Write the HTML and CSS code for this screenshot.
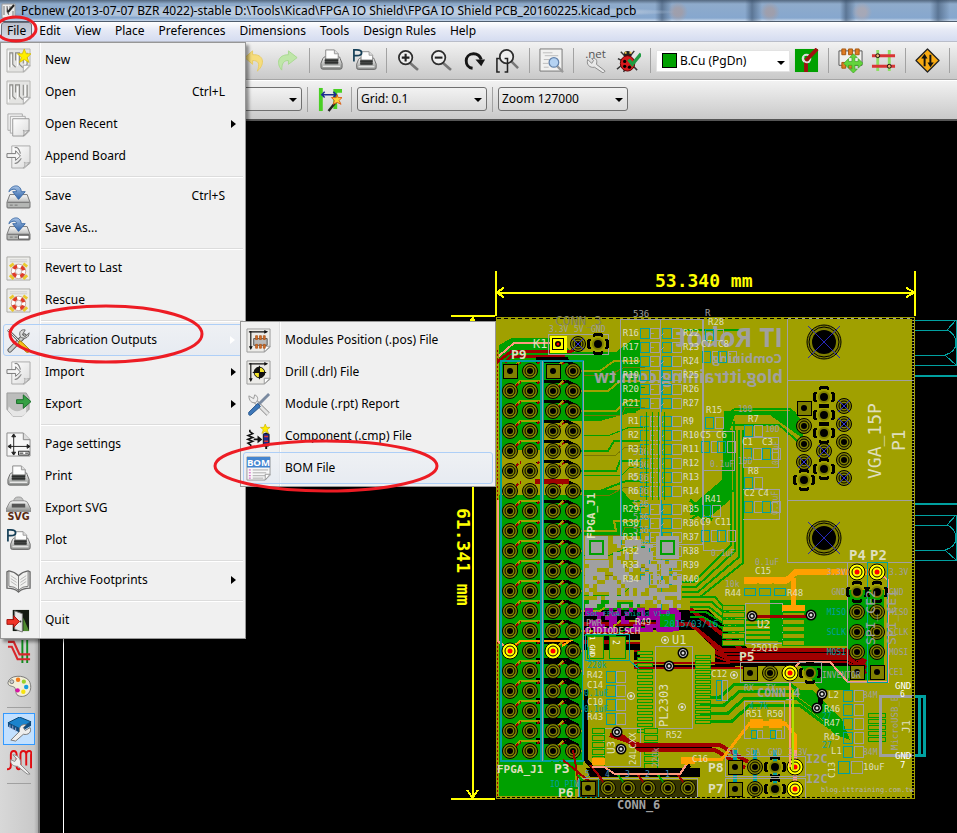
FILE: index.html
```html
<!DOCTYPE html>
<html lang="en">
<head>
<meta charset="utf-8">
<title>Pcbnew</title>
<link rel="stylesheet" href="styles.css">
</head>
<body>
<svg class="defs" aria-hidden="true">
  <defs>
    <linearGradient id="metal" x1="0" y1="0" x2="0" y2="1"><stop offset="0" stop-color="#fafafa"/><stop offset="1" stop-color="#8c8e8c"/></linearGradient>
    <linearGradient id="leaf" x1="0" y1="0" x2="1" y2="1"><stop offset="0" stop-color="#ffffff"/><stop offset="1" stop-color="#dcdcdc"/></linearGradient>
    <linearGradient id="blue" x1="0" y1="0" x2="0" y2="1"><stop offset="0" stop-color="#a9c4e6"/><stop offset="1" stop-color="#2d62a8"/></linearGradient>
  </defs>
  <symbol id="i-board" viewBox="0 0 26 26">
    <path d="M1 1H25V19L19 25H1Z" fill="#e4e4e2" stroke="#b5b5b2"/>
    <path d="M4 20V5H7V17L10 20M10 13V5H14V17L17 20H19L22 17V5M18 5V16" fill="none" stroke="#8b8b88" stroke-width="1.2"/>
    <path d="M5.500 7V20M12 7V19M20 5V17M2.500 3V23" fill="none" stroke="#fff"/>
    <path d="M25 18H18V25Z" fill="#fafafa" stroke="#aaa"/>
  </symbol>
  <symbol id="i-new" viewBox="0 0 26 26">
    <use href="#i-board"/>
    <path d="M19 1L21 6H26L22 10L24 15L19 12L14 15L16 10L12 6H17Z" fill="#ffef00" stroke="#d2b800" stroke-width=".8"/>
  </symbol>
  <symbol id="i-docs" viewBox="0 0 26 26">
    <path d="M2 2H17V19H2Z" fill="#f4f4f4" stroke="#aaa"/><path d="M4.500 4.500H20V22H4.500Z" fill="#f4f4f4" stroke="#aaa"/>
    <path d="M7 7H24V20L19 25H7Z" fill="url(#leaf)" stroke="#999"/><path d="M24 19C21 20 19 20 18 19C19 21 19 23 18 25Z" fill="#e8e8e8" stroke="#999"/>
  </symbol>
  <symbol id="i-append" viewBox="0 0 26 26">
    <path d="M6 2H25V20L19 25H6Z" fill="url(#leaf)" stroke="#aaa"/><path d="M25 19C22 20 20 20 19 19C20 21 20 23 18 25Z" fill="#e4e4e4" stroke="#aaa"/>
    <path d="M9 4C12 2 14 6 15 10M9 20C12 21 14 17 16 15" fill="none" stroke="#888" stroke-width="1.300"/>
    <path d="M1 10H10V7L15 12.500L10 17V14H1Z" fill="#f5f5f5" stroke="#777"/>
  </symbol>
  <symbol id="i-disk" viewBox="0 0 26 26">
    <path d="M4 11H22L25 19V24Q25 25 24 25H2Q1 25 1 24V19Z" fill="url(#metal)" stroke="#777"/><path d="M1.500 19H24.500" stroke="#666"/><path d="M2 20H24V24H2Z" fill="#b4b6b4"/><path d="M4 22H7M9 22H12" stroke="#777"/>
    <path d="M3 8C5 1 15-1 16 8H20L13 16L7 8H11C11 5 7 4 3 8Z" fill="url(#blue)" stroke="#3b6aa5"/>
  </symbol>
  <symbol id="i-saveas" viewBox="0 0 26 26"><use href="#i-disk"/><path d="M13 20H24V24H13Z" fill="#fff" stroke="#555"/></symbol>
  <symbol id="i-buoy" viewBox="0 0 26 26">
    <path d="M1 1H25V25H1Z" fill="#ededea" stroke="#a9a9a6"/><path d="M4 4H22M4 6H22" stroke="#ccc"/>
    <path d="M4 11L8 8M22 11L18 8M4 20L8 24M22 20L18 24" stroke="#eac92e" stroke-width="3"/>
    <circle cx="13" cy="16" r="5.500" fill="none" stroke="#fff" stroke-width="4"/><circle cx="13" cy="16" r="5.500" fill="none" stroke="#e13b28" stroke-width="4" stroke-dasharray="4.320 4.320" stroke-dashoffset="-2.200"/>
    <circle cx="13" cy="16" r="7.500" fill="none" stroke="#b4887f" stroke-width=".7"/><circle cx="13" cy="16" r="3.300" fill="#f5f5f5" stroke="#b4887f" stroke-width=".7"/>
  </symbol>
  <symbol id="i-tools" viewBox="0 0 26 26">
    <path d="M4 23L19 8" stroke="#555" stroke-width="5" stroke-linecap="round"/><path d="M4 23L19 8" stroke="#c9cbc9" stroke-width="3" stroke-linecap="round"/>
    <path d="M24 5L20 9L17 7L20 2C15 1 13 5 15 9C18 12 24 11 24 5Z" fill="#d9dad9" stroke="#666"/>
    <path d="M2 2L14 14" stroke="#666" stroke-width="2.500"/><path d="M2 2L14 14" stroke="#eee"/><path d="M14 13L17 15L25 23C25 25 22 26 21 25L13 16Z" fill="#f4c21a" stroke="#a98100"/>
  </symbol>
  <symbol id="i-export" viewBox="0 0 26 26">
    <path d="M1 1H21L24 6V18L17 25H7L1 18Z" fill="#bcbdbc" stroke="#999"/><path d="M3 15Q11 25 21 15V22L17 25H7L2 19Z" fill="#e6e6e6"/>
    <path d="M11 8H18V3L26 10L18 17V12H11Z" fill="#35a044" stroke="#176c28"/>
  </symbol>
  <symbol id="i-page" viewBox="0 0 26 26">
    <path d="M1 1H18L25 8V25H1Z" fill="#f7f7f7" stroke="#888"/><path d="M18 1V8H25" fill="#ddd" stroke="#888"/>
    <path d="M8 3V23M3 15H24M8 2L6 5H10ZM8 24L6 21H10ZM2 15L5 13V17ZM25 15L22 13V17Z" fill="#222" stroke="#222"/>
    <path d="M13 20H24V24H13ZM14 22H18M20 22H23" fill="#fff" stroke="#222"/>
  </symbol>
  <symbol id="i-print" viewBox="0 0 26 26">
    <path d="M4 11Q5 9 7 9H20Q22 9 22 11L24 16V20Q24 22 22 22H4Q2 22 2 20V16Z" fill="url(#metal)" stroke="#666"/>
    <path d="M7 2H16L20 6V12H7Z" fill="#fdfdfd" stroke="#888"/><path d="M16 2V6H20" fill="#ddd" stroke="#999"/>
    <path d="M6 11H20V17H6Z" fill="#4a4c4b"/><path d="M6 13H20M6 15H20" stroke="#2c2e2d"/><path d="M4 19H22" stroke="#fff"/>
  </symbol>
  <symbol id="i-svg" viewBox="0 0 26 26">
    <path d="M8 6Q8 1 13 1Q18 1 18 6Z" fill="#c4c5c4" stroke="#999"/><path d="M3 8Q4 5 7 5H19Q22 5 23 8L26 14V16H0V14Z" fill="url(#metal)" stroke="#888"/><path d="M6 8H20V12H6Z" fill="#555"/>
    <text x="13" y="25" class="ic-svg">SVG</text>
  </symbol>
  <symbol id="i-plot" viewBox="0 0 26 26"><use href="#i-print" x="3" y="1" width="24" height="26"/><path d="M2 14V2H5Q10 2 10 5T5 8H2" fill="none" stroke="#153f57" stroke-width="1.800"/></symbol>
  <symbol id="i-book" viewBox="0 0 26 26">
    <path d="M1 4L3 3Q9 4 13 8Q17 4 23 3L25 4V21Q17 21 13 25Q9 21 1 21Z" fill="#f1f1ef" stroke="#666" stroke-width="1.400"/>
    <path d="M13 8V24M3 4V19Q9 19 13 23Q17 19 23 19V4" fill="none" stroke="#777"/><path d="M5 8L11 12M5 11L11 15M5 14L11 18M21 8L15 12M21 11L15 15M21 14L15 18" stroke="#b5b5b5"/>
  </symbol>
  <symbol id="i-quit" viewBox="0 0 26 26">
    <path d="M7 2H24V24H7Z" fill="#141a12"/><path d="M18 10L24 24H18Z" fill="#4f8a30"/><path d="M9 3L17 6V25L9 22Z" fill="#e8e8e8" stroke="#777"/><circle cx="15" cy="14" r="1" fill="#333"/>
    <path d="M1 12H8V8L14 14L8 20V17H1Z" fill="#ef3326" stroke="#a01510"/>
  </symbol>
  <symbol id="i-sheet" viewBox="0 0 26 26"><path d="M1 1H25V20L19 25H1Z" fill="#ecebe8" stroke="#999"/><path d="M25 19H19V25Z" fill="#fff" stroke="#999"/><path d="M3 4H21M5 3V21" stroke="#111" stroke-width="1.200"/><path d="M23 4L19 2V6ZM5 23L3 19H7Z" fill="#111"/></symbol>
  <symbol id="i-pos" viewBox="0 0 26 26"><use href="#i-sheet"/><path d="M8 11H22V18H8Z" fill="#b9b9b9" stroke="#555"/><path d="M10 8H12V12H10ZM14 8H16V12H14ZM18 8H20V12H18ZM10 17H12V21H10ZM14 17H16V21H14ZM18 17H20V21H18Z" fill="#d9702a" stroke="#a8551c" stroke-width=".8"/></symbol>
  <symbol id="i-drill" viewBox="0 0 26 26"><use href="#i-sheet"/><circle cx="14" cy="13" r="5.500" fill="#f0e028" stroke="#111"/><path d="M14 13V7.500A5.500 5.500 0 0 0 8.500 13ZM14 13V18.500A5.500 5.500 0 0 0 19.500 13ZM7 13H21M14 6V20" fill="#111" stroke="#111"/></symbol>
  <symbol id="i-report" viewBox="0 0 26 26"><path d="M23 23L7 7" stroke="#888" stroke-width="4.500"/><path d="M23 23L7 7" stroke="#e4e4e4" stroke-width="3"/><path d="M3 4L8 7L9 3C13 4 13 9 10 11C6 12 3 9 3 4Z" fill="#eee" stroke="#999"/><path d="M24 2L13 13" stroke="#7a8aa0" stroke-width="3"/><path d="M12 12L15 15L5 24Q2 25 3 21Z" fill="#3e77b8" stroke="#28588f"/></symbol>
  <symbol id="i-cmp" viewBox="0 0 26 26"><path d="M4 6V8L7 10L2 12L7 14L2 16L7 18L2 20L5 22V25" fill="none" stroke="#111" stroke-width="1.600"/><path d="M8 15H12V12L17 16L12 20V17H8Z" fill="#111"/><path d="M21 9V26" stroke="#111" stroke-width="2"/><rect x="18" y="10" width="6" height="13" rx="1" fill="#1a2890" stroke="#111"/><path d="M19 13H23M19 18H23" stroke="#e0342d" stroke-width="1.500"/><path d="M20 0L21.500 3.500H25L22 6L23.500 10L20 7.500L16.500 10L18 6L15 3.500H18.500Z" fill="#ffed00" stroke="#c3a800" stroke-width=".6"/></symbol>
  <symbol id="i-bom" viewBox="0 0 26 26"><path d="M1 1H25V20L20 25H1Z" fill="#f7f7f7" stroke="#999"/><path d="M1 1H25V12H1Z" fill="#4384cf"/><text x="13" y="10" class="ic-bom">BOM</text><path d="M7 14.500H23M7 17.500H21M7 20.500H20M7 23H18" stroke="#aaa"/><path d="M3 14.500H5M3 17.500H5M3 20.500H5M3 23H5" stroke="#d048c0"/><path d="M25 19H20V25Z" fill="#fff" stroke="#999"/></symbol>
  <symbol id="i-undo" viewBox="0 0 26 26"><path d="M3 10L11 3V7C22 6 25 16 16 24C19 16 17 13 11 13V17Z" fill="#f6dd7c" stroke="#e8cc66"/></symbol>
  <symbol id="i-redo" viewBox="0 0 26 26"><path d="M23 10L14 3V7C3 7 1 16 7 23C7 16 9 13 14 13V17Z" fill="#bfe6a9" stroke="#a8d890"/></symbol>
  <symbol id="i-lens" viewBox="0 0 26 26"><path d="M14 15L22 22" stroke="#777" stroke-width="2.800" stroke-linecap="round"/><circle cx="10" cy="10" r="7" fill="#eee" stroke="#2d2d2d" stroke-width="1.800"/></symbol>
  <symbol id="i-zin" viewBox="0 0 26 26"><use href="#i-lens"/><path d="M6 10H14M10 6V14" stroke="#222" stroke-width="2.200"/></symbol>
  <symbol id="i-zout" viewBox="0 0 26 26"><use href="#i-lens"/><path d="M6 10H14" stroke="#222" stroke-width="2.200"/></symbol>
  <symbol id="i-refresh" viewBox="0 0 26 26"><path d="M11 21C2 20 2 6 12 6Q18 6 20 12" fill="none" stroke="#161616" stroke-width="3"/><path d="M14 12H24L20 19Z" fill="#161616"/></symbol>
  <symbol id="i-zfit" viewBox="0 0 26 26"><path d="M17 14L24 21" stroke="#777" stroke-width="2.600"/><circle cx="12" cy="9" r="7" fill="#eee" stroke="#2d2d2d" stroke-width="1.800"/><path d="M5 11H2V25H5M10 11H13V25H10" fill="none" stroke="#222" stroke-width="1.600"/></symbol>
  <symbol id="i-preview" viewBox="0 0 26 26"><path d="M1 1H24V24H1Z" fill="#f1f1f0" stroke="#777"/><path d="M4 5H14M6 8H20M5 12H11M4 16H10M5 20H10" stroke="#bbb"/><path d="M19 19L25 25" stroke="#999" stroke-width="2.500"/><circle cx="15.500" cy="15" r="5" fill="#b4d2f2" stroke="#6483ab" stroke-width="1.300"/></symbol>
  <symbol id="i-net" viewBox="0 0 26 26"><text x="13" y="10" class="ic-net">.net</text><path d="M5 12L9 16L11 13L9 11C14 10 15 13 14 17L23 24L21 26L12 20C7 21 3 17 5 12Z" fill="#e9e9e9" stroke="#888"/></symbol>
  <symbol id="i-bug" viewBox="0 0 26 26"><path d="M5 4L9 8M19 3L15 8M2 11L6 13M1 22L6 18M22 23L18 19M8 25L9 22" stroke="#333" stroke-width="1.500"/><circle cx="12" cy="7" r="4" fill="#222"/><path d="M9 5H11M14 5H16" stroke="#ecc64a" stroke-width="2"/><ellipse cx="12" cy="16" rx="7.500" ry="8" fill="#d7191d" stroke="#5c0000"/><circle cx="9" cy="14" r="1.700"/><circle cx="9" cy="19" r="1.700"/><circle cx="14" cy="20" r="1.700"/><path d="M13 12L17 17L26 6" fill="none" stroke="#209c42" stroke-width="3.500"/></symbol>
  <symbol id="i-pair" viewBox="0 0 26 26"><path d="M1 1H25V25H1Z" fill="#00a000"/><circle cx="13" cy="11" r="4" fill="none" stroke="#ddd" stroke-width="2"/><path d="M12.500 25V13L24 1" fill="none" stroke="#a01010" stroke-width="4"/><path d="M10 9A4 4 0 0 0 16 14" fill="none" stroke="#ddd" stroke-width="2"/></symbol>
  <symbol id="i-mod" viewBox="0 0 26 26"><path d="M1 3H25V18H1Z" fill="#f0f0ee" stroke="#555"/><path d="M4 1H8V7H4ZM11 1H15V7H11ZM18 1H22V7H18ZM4 15H8V21H4ZM11 15H15V21H11Z" fill="#e07c22" stroke="#a4560f"/><path d="M16 6L20 10H17.500V14H21V11L26 16L21 21V18H17.500V22H20L16 26L12 22H14.500V18H11V21L6 16L11 11V14H14.500V10H12Z" fill="#63d43c" stroke="#39a022" stroke-width=".7"/></symbol>
  <symbol id="i-track" viewBox="0 0 26 26"><path d="M7 2V24M19 2V24" stroke="#8dde63" stroke-width="3"/><path d="M1 8H25M1 19H25" stroke="#d93535" stroke-width="3"/><circle cx="7" cy="8" r="2" fill="#f0b070" stroke="#111"/><circle cx="19" cy="19" r="2" fill="#f0b070" stroke="#111"/></symbol>
  <symbol id="i-sign" viewBox="0 0 26 26"><path d="M13 1L25 13L13 25L1 13Z" fill="#f8aa12" stroke="#222" stroke-linejoin="round" stroke-width="1.300"/><path d="M10 19V10M16 7V16" stroke="#111" stroke-width="2"/><path d="M6.500 11L10 6L13 11ZM13 15H19.500L16 20Z" fill="#111"/></symbol>
  <symbol id="i-auto" viewBox="0 0 26 26"><path d="M4 1V25" stroke="#49cf23" stroke-width="4"/><path d="M19 23V4H26" fill="none" stroke="#49cf23" stroke-width="4"/><path d="M5 8H20M8 5L5 8L8 11M17 5L20 8L17 11" fill="none" stroke="#1c2c91" stroke-width="1.600"/><path d="M12 25L20 15" stroke="#222" stroke-width="2.500"/><path d="M21 8L22 11L26 11L23 14L25 18L21 16L17 18L18 14L15 11L20 11Z" fill="#ffd33a" stroke="#d85f1b"/></symbol>
  <symbol id="i-route" viewBox="0 0 26 26"><path d="M16 0V24M21 0V24" stroke="#108c1e" stroke-width="2"/><path d="M1 2H7L13 15H24M1 7H5L11 20H24" fill="none" stroke="#d8262a" stroke-width="2.200"/></symbol>
  <symbol id="i-palette" viewBox="0 0 26 26"><path d="M1 9C2 1 18 0 23 7C28 17 21 25 13 23C8 22 10 17 8 14C5 12 1 13 1 9Z" fill="#f2eed8" stroke="#777"/><circle cx="5" cy="8" r="2" fill="#ccc" stroke="#777"/><circle cx="11.500" cy="6" r="2.300" fill="#f47b19"/><circle cx="17.500" cy="8" r="2.200" fill="#9bd32a"/><circle cx="20" cy="13.500" r="2.300" fill="#149fe0"/><circle cx="17" cy="18.500" r="2.300" fill="#f6e30c"/><circle cx="11" cy="17" r="2.300" fill="#d814a4"/></symbol>
  <symbol id="i-chip" viewBox="0 0 26 26"><path d="M1 6L13 0L25 5L13 12Z" fill="#1b83cc" stroke="#0a4676"/><path d="M1 6L13 12L25 5V9L13 16L1 10Z" fill="#0d4a7e"/><path d="M3 8V12M6 9V13M9 11V15" stroke="#aac"/><path d="M4 24L13 15C12 11 15 7 20 8L17 11L19 14L24 11C26 16 22 19 17 18L9 25Z" fill="#eee" stroke="#777"/></symbol>
  <symbol id="i-wave" viewBox="0 0 26 26"><path d="M0 20Q4 20 4 16V5Q4 1 7 1T10 5V16Q10 20 12 20T14 16V5Q14 1 17 1T20 5V16M20 5Q20 1 23 1T25 5V19" fill="none" stroke="#e00d12" stroke-width="2"/><path d="M24 25L14 15C15 9 11 5 6 5L10 9L8 12L4 10C3 15 7 17 11 17L21 25Z" fill="#eee" stroke="#888"/></symbol>
</svg>

<header class="titlebar">
  <svg class="app-icon" viewBox="0 0 16 16" aria-hidden="true"><path d="M1 1H14V13L12 15H1Z" fill="#eee" stroke="#999"/><path d="M3 3V12M6 3V9L8 12M9 3V7M12 8V13" stroke="#777"/><path d="M7 9L13 2" stroke="#222" stroke-width="2"/></svg>
  <h1>Pcbnew (2013-07-07 BZR 4022)-stable D:\Tools\Kicad\FPGA IO Shield\FPGA IO Shield PCB_20160225.kicad_pcb</h1>
</header>

<nav class="menubar">
  <div class="menu-root">
    <button class="open">File</button>
    <div class="menu">
      <button class="item"><svg class="ic"><use href="#i-new"/></svg><span>New</span></button>
      <button class="item"><svg class="ic"><use href="#i-board"/></svg><span>Open</span><kbd>Ctrl+L</kbd></button>
      <button class="item sub"><svg class="ic"><use href="#i-docs"/></svg><span>Open Recent</span></button>
      <button class="item"><svg class="ic"><use href="#i-append"/></svg><span>Append Board</span></button>
      <hr>
      <button class="item"><svg class="ic"><use href="#i-disk"/></svg><span>Save</span><kbd>Ctrl+S</kbd></button>
      <button class="item"><svg class="ic"><use href="#i-saveas"/></svg><span>Save As...</span></button>
      <hr>
      <button class="item"><svg class="ic"><use href="#i-buoy"/></svg><span>Revert to Last</span></button>
      <button class="item"><svg class="ic"><use href="#i-buoy"/></svg><span>Rescue</span></button>
      <hr>
      <div class="branch">
        <button class="item sub active"><svg class="ic"><use href="#i-tools"/></svg><span>Fabrication Outputs</span></button>
        <div class="menu submenu">
          <button class="item"><svg class="ic"><use href="#i-pos"/></svg><span>Modules Position (.pos) File</span></button>
          <button class="item"><svg class="ic"><use href="#i-drill"/></svg><span>Drill (.drl) File</span></button>
          <button class="item"><svg class="ic"><use href="#i-report"/></svg><span>Module (.rpt) Report</span></button>
          <button class="item"><svg class="ic"><use href="#i-cmp"/></svg><span>Component (.cmp) File</span></button>
          <button class="item active"><svg class="ic"><use href="#i-bom"/></svg><span>BOM File</span></button>
        </div>
      </div>
      <button class="item sub"><svg class="ic"><use href="#i-append"/></svg><span>Import</span></button>
      <button class="item sub"><svg class="ic"><use href="#i-export"/></svg><span>Export</span></button>
      <hr>
      <button class="item"><svg class="ic"><use href="#i-page"/></svg><span>Page settings</span></button>
      <button class="item"><svg class="ic"><use href="#i-print"/></svg><span>Print</span></button>
      <button class="item"><svg class="ic"><use href="#i-svg"/></svg><span>Export SVG</span></button>
      <button class="item"><svg class="ic"><use href="#i-plot"/></svg><span>Plot</span></button>
      <hr>
      <button class="item sub"><svg class="ic"><use href="#i-book"/></svg><span>Archive Footprints</span></button>
      <hr>
      <button class="item"><svg class="ic"><use href="#i-quit"/></svg><span>Quit</span></button>
    </div>
  </div>
  <button>Edit</button><button>View</button><button>Place</button><button>Preferences</button><button>Dimensions</button><button>Tools</button><button>Design Rules</button><button>Help</button>
</nav>

<div class="toolbar main-tools">
  <button aria-label="Undo"><svg class="ic"><use href="#i-undo"/></svg></button>
  <button aria-label="Redo"><svg class="ic"><use href="#i-redo"/></svg></button>
  <i class="sep"></i>
  <button aria-label="Print"><svg class="ic"><use href="#i-print"/></svg></button>
  <button aria-label="Plot"><svg class="ic"><use href="#i-plot"/></svg></button>
  <i class="sep"></i>
  <button aria-label="Zoom in"><svg class="ic"><use href="#i-zin"/></svg></button>
  <button aria-label="Zoom out"><svg class="ic"><use href="#i-zout"/></svg></button>
  <button aria-label="Redraw"><svg class="ic"><use href="#i-refresh"/></svg></button>
  <button aria-label="Zoom to fit"><svg class="ic"><use href="#i-zfit"/></svg></button>
  <i class="sep"></i>
  <button aria-label="Find"><svg class="ic"><use href="#i-preview"/></svg></button>
  <i class="sep"></i>
  <button aria-label="Read netlist"><svg class="ic"><use href="#i-net"/></svg></button>
  <button aria-label="Design rules check"><svg class="ic"><use href="#i-bug"/></svg></button>
  <i class="sep"></i>
  <div class="combo layer"><i class="swatch"></i><select aria-label="Layer"><option>B.Cu (PgDn)</option></select></div>
  <button aria-label="Layer pair"><svg class="ic"><use href="#i-pair"/></svg></button>
  <i class="sep"></i>
  <button aria-label="Footprint mode"><svg class="ic"><use href="#i-mod"/></svg></button>
  <button aria-label="Track mode"><svg class="ic"><use href="#i-track"/></svg></button>
  <i class="sep"></i>
  <button aria-label="Autorouter"><svg class="ic"><use href="#i-sign"/></svg></button>
  <i class="sep"></i>
</div>

<div class="toolbar aux-tools">
  <div class="combo"><select aria-label="Via size"><option></option></select></div>
  <i class="sep"></i>
  <button aria-label="Auto track width"><svg class="ic"><use href="#i-auto"/></svg></button>
  <i class="sep"></i>
  <div class="combo"><select aria-label="Grid"><option>Grid: 0.1</option></select></div>
  <i class="sep"></i>
  <div class="combo"><select aria-label="Zoom"><option>Zoom 127000</option></select></div>
</div>

<main class="workspace">
  <aside class="side-tools">
    <button aria-label="Show tracks"><svg class="ic"><use href="#i-route"/></svg></button>
    <button aria-label="High contrast"><svg class="ic"><use href="#i-palette"/></svg></button>
    <i class="rule"></i>
    <button class="on" aria-label="Layers manager"><svg class="ic"><use href="#i-chip"/></svg></button>
    <button aria-label="Microwave tools"><svg class="ic"><use href="#i-wave"/></svg></button>
    <i class="rule"></i>
  </aside>
  <svg id="board" class="board" viewBox="40 121 917 712" preserveAspectRatio="xMinYMin slice" role="img" aria-label="Circuit board"></svg>
</main>

<svg class="marks" viewBox="0 0 957 833" preserveAspectRatio="xMinYMin meet" aria-hidden="true">
  <ellipse cx="16" cy="29" rx="20" ry="12"/>
  <ellipse cx="106" cy="334" rx="96" ry="28"/>
  <ellipse cx="326" cy="466" rx="111" ry="25"/>
</svg>
<script src="board.js"></script>
</body>
</html>
```
FILE: styles.css
```css
* { box-sizing: border-box; }
html, body { height: 100%; }
body {
  margin: 0;
  display: flex;
  flex-direction: column;
  position: relative;
  overflow: hidden;
  font: 12px/16px "Noto Sans", "Open Sans", sans-serif;
  color: #000;
  background: #000;
}
button, select { font: inherit; color: inherit; }
button { border: 0; padding: 0; background: none; }
.defs { position: absolute; width: 0; height: 0; }
.ic { width: 25px; height: 25px; flex: none; }

.titlebar {
  flex: none;
  display: flex;
  align-items: center;
  gap: 4px;
  height: 22px;
  padding-left: 1px;
  border-bottom: 1px solid #4f5d6e;
  background:
    radial-gradient(circle at 678px 12px, #a99a9caa 0 4px, transparent 10px),
    radial-gradient(circle at 770px 12px, #a99a9caa 0 4px, transparent 10px),
    radial-gradient(circle at 862px 12px, #b4a8acaa 0 4px, transparent 10px),
    radial-gradient(ellipse at 340px 12px, #c9d6e6 0, #b4c6dccc 290px, transparent 340px),
    linear-gradient(90deg, transparent 0 655px, #33496488 662px, transparent 672px 745px, #33496488 752px, transparent 762px 840px, #33496488 846px, transparent 856px 930px, #33496488 938px, transparent 950px),
    linear-gradient(#54687f, #8fabcb 4px, #86a7ce 18px, #c9d8ea);
}
.titlebar h1 { margin: 0; font-size: 12px; font-weight: 400; white-space: nowrap; }
.app-icon { width: 16px; height: 16px; flex: none; }

.menubar {
  flex: none;
  display: flex;
  height: 20px;
  background: linear-gradient(#fff, #e6eaf6 8px, #d5dcf0);
  border-bottom: 1px solid #b9bdc9;
}
.menubar > button, .menu-root > button { height: 18px; padding: 0 7px; }
.menu-root { position: relative; }
.menu-root > .open {
  border: 1px solid #6b6f78;
  border-radius: 3px;
  margin-left: 1px;
  padding: 0 5px;
  background: linear-gradient(#b9bfcc, #d7dbe6);
}

.menu {
  position: absolute;
  z-index: 5;
  left: 0;
  top: 20px;
  width: 246px;
  padding: 1px 2px 2px;
  border: 1px solid #979797;
  background: linear-gradient(90deg, transparent 38px, #dededf 38px 39px, #fff 39px 40px, transparent 40px) #f0f0f0;
  box-shadow: 3px 3px 3px #0006;
}
.item {
  position: relative;
  display: flex;
  align-items: center;
  gap: 14px;
  width: 100%;
  height: 32px;
  padding: 0 18px 0 3px;
  text-align: left;
  white-space: nowrap;
}
.item kbd { margin-left: auto; font: inherit; }
.item.sub::after {
  content: "";
  margin-left: auto;
  margin-right: -11px;
  border: 4px solid transparent;
  border-left: 5px solid #000;
  border-right: 0;
}
.item.active {
  border: 1px solid #aecff7;
  border-radius: 3px;
  padding-left: 2px;
  background: linear-gradient(#edf1f788, #dfe7f388);
}
.item.sub.active::after { border-left-color: #fff; }
.menu hr {
  height: 8px;
  margin: 0 0 0 38px;
  border: 0;
  background: linear-gradient(transparent 4px, #dcdcdc 4px 5px, #fff 5px 6px, transparent 6px);
}
.branch { position: relative; }
.submenu { left: 237px; top: -3px; width: 256px; padding: 2px; box-shadow: none; }

.toolbar {
  flex: none;
  display: flex;
  align-items: center;
  background: linear-gradient(#f2f2f2, #c9c9c9);
  overflow: hidden;
}
.toolbar button { flex: none; display: grid; place-items: center; width: 33px; height: 30px; }
.sep { flex: none; width: 11px; height: 25px; background: linear-gradient(90deg, transparent 5px, #a2a2a2 5px 6px, transparent 6px); }
.main-tools { height: 38px; padding-left: 238px; border-bottom: 1px solid #a5a5a5; }
.aux-tools { height: 41px; padding: 0 0 2px 172px; border-top: 1px solid #fff; border-bottom: 2px solid #555; }
.combo {
  flex: none;
  position: relative;
  display: flex;
  align-items: center;
  width: 130px;
  height: 24px;
  border: 1px solid #707070;
  border-radius: 3px;
  background: linear-gradient(#f2f2f2, #dadada);
}
.combo::after {
  content: "";
  position: absolute;
  right: 4px;
  top: 10px;
  border: 4px solid transparent;
  border-top-color: #000;
  border-bottom: 0;
  pointer-events: none;
}
.combo select { flex: 1; width: 100%; height: 100%; padding: 0 3px; border: 0; background: none; appearance: none; }
.layer { width: 134px; height: 22px; border-color: #e3e3e3; border-radius: 1px; background: #fff; padding-left: 5px; }
.swatch { flex: none; width: 15px; height: 15px; border: 1px solid #000; background: #00a000; }

.workspace { flex: 1; min-height: 0; display: flex; }
.side-tools {
  flex: none;
  width: 40px;
  padding: 514px 0 0 3px;
  border-right: 2px solid #777;
  background: linear-gradient(90deg, #d8d8d8, #c9c9c9 34px, #aaa);
  overflow: hidden;
}
.side-tools button { display: grid; place-items: center; width: 32px; height: 34px; }
.side-tools .on { height: 32px; border: 1px solid #3399ff; background: #c2e0ff; }
.rule { display: block; width: 24px; height: 10px; margin-left: 4px; background: linear-gradient(transparent 4px, #a0a0a0 4px 5px, transparent 5px); }
.board { flex: 1; min-width: 0; width: 100%; height: 100%; display: block; background: #000; shape-rendering: crispEdges; }
.board circle { shape-rendering: geometricPrecision; }
.board text { font-family: "DejaVu Sans Mono", monospace; }
.board .plain { font-family: "Open Sans", sans-serif; font-weight: 700; }
.marks { position: absolute; z-index: 10; left: 0; top: 0; width: 100%; height: 100%; pointer-events: none; }
.marks ellipse { fill: none; stroke: #ed1c24; stroke-width: 3; }

.ic-svg { font: 700 10px "DejaVu Sans", sans-serif; fill: #5a2a12; text-anchor: middle; }
.ic-bom { font: 700 10px "Open Sans", sans-serif; fill: #fff; text-anchor: middle; }
.ic-net { font: 12px "Open Sans", sans-serif; fill: #555; text-anchor: middle; }
```
FILE: board.js
```js
const NS = "http://www.w3.org/2000/svg";
const board = document.getElementById("board");
const OLIVE = "#a0a000", GREEN = "#00a000", CYAN = "#00a0a0", GREY = "#a0a0a0";
const RED = "#a00000", DARK = "#808000", SILK = "#dedebc", YELLOW = "#ffff00", ORANGE = "#ffa000";

function add(tag, attrs, content) {
  const el = document.createElementNS(NS, tag);
  for (const k in attrs) el.setAttribute(k, attrs[k]);
  if (content !== undefined) el.textContent = content;
  board.appendChild(el);
  return el;
}
const fill = (d, c) => add("path", { d, fill: c });
const line = (d, c, w = 1, extra = {}) => add("path", { d, fill: "none", stroke: c, "stroke-width": w, ...extra });
const box = (x, y, w, h, c, sw = 1, f = "none") => add("rect", { x, y, width: w, height: h, fill: f, stroke: c, "stroke-width": sw });
const dot = (x, y, r, f, s = "none", sw = 1) => add("circle", { cx: x, cy: y, r, fill: f, stroke: s, "stroke-width": sw });
const label = (t, x, y, size = 9, c = SILK, extra = {}) => add("text", { x, y, "font-size": size, fill: c, ...extra }, t);
const down = (t, x, y, size, c, extra = {}) => label(t, 0, 0, size, c, { transform: `translate(${x} ${y}) rotate(90)`, ...extra });
const up = (t, x, y, size, c, extra = {}) => label(t, 0, 0, size, c, { transform: `translate(${x} ${y}) rotate(-90)`, ...extra });

function pad(x, y, kind = "round") {
  if (kind === "square") { box(x - 7, y - 7, 14, 14, "#000", 1, DARK); dot(x, y, 3, "#000"); return; }
  if (kind === "lit") { dot(x, y, 8, YELLOW, "#000"); dot(x, y, 5, YELLOW, "#000"); dot(x, y, 2.5, "#ff0000"); return; }
  if (kind === "thermal") {
    dot(x, y, 5, "#000", DARK, 2);
    line(`M${x - 5} ${y - 8}Q${x} ${y - 12} ${x + 5} ${y - 8}M${x - 5} ${y + 8}Q${x} ${y + 12} ${x + 5} ${y + 8}M${x - 8} ${y - 5}Q${x - 12} ${y} ${x - 8} ${y + 5}M${x + 8} ${y - 5}Q${x + 12} ${y} ${x + 8} ${y + 5}`, "#000", 3);
    return;
  }
  dot(x, y, 7.5, DARK, "#000");
  dot(x, y, 5, DARK, "#000");
  dot(x, y, 3, "#000");
  if (kind === "cross") line(`M${x - 6} ${y - 6}L${x + 6} ${y + 6}M${x + 6} ${y - 6}L${x - 6} ${y + 6}`, "#3030d0");
}
const via = (x, y, halo = "#000") => { dot(x, y, 5.5, halo); dot(x, y, 3.5, "none", "#ddd"); dot(x, y, 1.5, "#ddd"); };
function chip(x, y, w = 20, h = 11) {
  const p = Math.round(w * 0.46);
  box(x + 0.5, y + 0.5, p, h, CYAN);
  box(x + w - p + 0.5, y + 0.5, p, h, GREY);
}

/* Sheet edge and board body */
line("M63.500 121V833", "#fff");
fill("M496 318H915V799H496Z", OLIVE);
fill("M499 345L512 338H560L571 352H616L632 340H640V410L600 421H540V450H499Z", GREEN);
fill("M583 352H636V413H583ZM583 490H622L640 512V536H583Z", GREEN);
fill("M499 495H583V600H640V640H583V765H575V796H499Z", GREEN);
fill("M770 600H875V646H800L770 640Z", GREEN);
fill("M800 665H850V690H820ZM848 590H884V680H848Z", GREEN);
fill("M724 411H795L805 440L770 415H735L730 430V500L712 515H690V507L722 480Z", GREEN);
fill("M790 690H812L842 720L850 740L835 735L812 706Z", GREEN);

/* Bus of dark copper through the middle */
fill("M583 610H708L750 650H848L866 668L850 666H700L690 660H583Z", "#000");
for (let i = 0; i < 4; i++) line(`M583 ${624 + i * 9}H${690 + i * 2}L${722 + i * 3} ${650 + i * 4}H846L866 ${662 + i * 3}`, RED, i % 2 ? 2 : 4);
line("M690 609L750 656H848L866 674", RED, 4);
fill("M640 630H695L715 650V667H640Z", OLIVE);
line("M583 663H730M583 668H745", RED, 2);
line("M583 665.500H735", "#000", 2);

/* Horizontal traces between the header and the resistor arrays */
for (let i = 0; i < 20; i++) {
  const y = 371 + i * 20;
  line(`M573 ${y}H${600 + (i % 3) * 8}L${614 + (i % 4) * 6} ${y - 10}H640`, i > 3 && i < 8 ? GREEN : OLIVE, 2);
  if (i < 14) line(`M583 ${y + 4}H${610 + (i % 3) * 6}L${625 + (i % 2) * 5} ${y - 4}H645`, i % 2 ? GREEN : "#787800", 1);
}
/* Fan-out on the right half */
for (let i = 0; i < 4; i++) line(`M682 ${582 + i * 5}H${694 + i * 2}L${731 + i * 4} ${545 + i * 6}V430`, GREEN, 2);
for (let i = 0; i < 5; i++) line(`M690 ${597 + i * 5}H${715 - i * 3}L${735 + i * 2} ${620 + i * 5}H${790 + i * 4}`, GREEN, 2);
for (let i = 0; i < 4; i++) line(`M700 ${697 + i * 8}H${720 + i * 4}L${735 + i * 5} ${684 + i * 7}H${790 + i * 3}L${824 + i * 2} ${710 + i * 6}`, GREEN, 3);
line("M682 330H750M724 416L735 409H790L805 425M730 425H779L802 445M734 421V490L690 520", GREEN, 2);
line("M690 500L712 520M716 507V494M690 507L705 520", GREEN, 3);

/* Header: two double-row connectors */
for (let i = 0; i < 20; i++) {
  const y = 371 + i * 20;
  line(`M536 ${y - 10}H567L578 ${y - 4}`, "#000", i > 13 ? 6 : 3);
  line(`M510 ${y}L520 ${y - 10}H541M553 ${y}L563 ${y - 10}`, OLIVE, 2);
  line(`M512 ${y - 2}L521 ${y - 9}M530 ${y}L541 ${y - 11}M558 ${y - 3}L566 ${y - 10}`, RED, 2, { "stroke-dasharray": "3 2" });
}
line("M497.500 350V797", RED, 1, { "stroke-dasharray": "2 2" });
line("M499 356L514 343H553M510 651L498 641V500", "#ff9a80", 2);
line("M497 362L512 351H572L580 345M505 362L512 356H565", RED, 3);
line("M536 358H566L573 366", "#000", 3);
line("M510 649L520 641H570L562 646", ORANGE, 2);
line("M535 481H569", RED, 5);
line("M500.500 361V761H541V361ZM543 361V761H583V361Z", CYAN, 2);
line("M542 361V761M583.500 361V690", GREY);
for (let i = 0; i < 20; i++) for (const x of [510, 530, 553, 573]) {
  const y = 371 + i * 20;
  const head = x === 510 || x === 553;
  pad(x, y, i === 0 && head ? "square" : i === 14 && head ? "lit" : "round");
}
box(548.5, 334.5, 60, 20, GREY);
box(550, 336, 16, 16, YELLOW, 1, YELLOW);
box(552.5, 338.5, 11, 11, "#000");
dot(558, 344, 3, "#000"); dot(558, 344, 1.5, "#f00");
pad(578, 344, "cross"); pad(598, 344, "thermal");

/* Lettering on the back side reads mirrored from the front */
const mirror = (t, x, y, size) => label(t, 0, 0, size, GREY, { transform: `translate(${x} ${y}) scale(-1 1)`, class: "plain" });
mirror("IT Robot", 783, 347, 26);
mirror("Combining", 782, 363, 13);
mirror("blog.ittraining.com.tw", 783, 383, 17);

/* Resistor arrays */
box(620.5, 319.500, 82, 225, GREY);
line("M660.500 319V545", GREY);
line("M621 360V545M661 360V620", CYAN);
const rows = [[333, 16, 22], [421, 1, 9], [509, 29, 35]];
for (const [top, left, right] of rows) for (let i = 0; i < 6; i++) {
  const y = top + i * 14;
  chip(640, y - 5, 19, 10); chip(662, y - 5, 19, 10);
  line(`M650 ${y}H654M660 ${y + 4}L664 ${y}M690 ${y - 4}V${y + 4}`, GREY);
}
for (let i = 0; i < 8; i++) { label("536", 633, 455 + i * 13, 9, GREY); line(`M${643 + i * 3} 412V500`, i % 2 ? GREEN : OLIVE); }
for (const [x, y] of [[705, 329], [702, 351], [718, 351], [705, 417], [744, 425], [701, 441], [717, 441], [743, 448], [762, 448], [744, 477], [744, 501], [762, 501], [702, 505], [701, 530], [717, 530]]) chip(x, y, 18, 11);
line("M703 318V550H722M703 431H734V470H703M743 437H778V467H743ZM743 489H779V519H743", GREY);

/* QR code */
let seed = 7;
const rnd = () => (seed = (seed * 1103515245 + 12345) & 0x7fffffff) / 0x7fffffff;
for (let gy = 0; gy < 24; gy++) for (let gx = 0; gx < 24; gx++) {
  if (gy < 6 && (gx < 7 || gx > 16)) continue;
  if (rnd() < 0.6) add("rect", { x: 585 + gx * 4, y: 536 + gy * 4, width: 4, height: 4, fill: gy > 17 ? "#a000a0" : GREY });
}
for (const x of [587, 658]) { box(x, 538, 19, 19, GREY, 4, GREEN); fill(`M${x + 4} 542H${x + 15}V553H${x + 4}Z`, GREY); }
box(658, 612, 19, 17, "#a000a0", 4, GREEN);

/* Lower left: USB bridge and regulators */
fill("M584 650H634V690H600L583 700Z", OLIVE);
box(587.5, 636.5, 16, 22, GREEN, 1, OLIVE); box(609.5, 636.5, 16, 22, GREEN, 1, OLIVE);
box(585.5, 634.5, 44, 26, CYAN);
line("M587 640L590 662M629 660L640 670", CYAN);
box(655.5, 646.5, 37, 82, GREY);
for (let i = 0; i < 14; i++) {
  box(637.5, 651.5 + i * 6, 15, 3, GREEN, 1, OLIVE);
  box(695.5, 655.5 + i * 5, 15, 3, GREEN, 1, OLIVE);
}
for (let i = 0; i < 4; i++) chip(606, 671 + i * 14, 19, 11);
box(603.5, 728.5, 37, 38, GREY);
for (let i = 0; i < 6; i++) { box(592.5, 728.5 + i * 7, 12, 5, GREEN, 1, OLIVE); box(644.5, 728.5 + i * 7, 13, 5, GREEN, 1, OLIVE); }
line("M586 690V760L596 772H680L690 765", "#000", 4);
fill("M586 768H700V777H590Z", "#000");
line("M573 750L580 790M563 760L590 782M590 765L602 779", RED, 2);
line("M617 732L640 750H715L745 768M610 735L640 745H720L748 762", RED, 4);
line("M632 747H712", "#000", 1);
line("M592 767H604L615 774H680L686 765", "#ff9a80", 2);
line("M686 765V759H722L750 723H785L795 735V780", ORANGE, 3);
box(592, 758, 12, 6, ORANGE, 1, ORANGE); box(681, 757, 13, 6, ORANGE, 1, ORANGE);
for (const [x, y] of [[683, 653], [669, 666], [617, 732], [621, 749]]) via(x, y);
for (const [x, y] of [[631, 696], [682, 707], [665, 640], [734, 675]]) via(x, y, OLIVE);

/* Bottom connectors */
line("M552 761V777L572 788H588M560 761V777", GREEN, 2);
fill("M580 780H697V797H580Z", "#000000aa");
box(578.5, 778.5, 119, 19, GREY);
line("M579 779V797H598V779", CYAN);
for (let i = 0; i < 6; i++) { const x = 588 + i * 20; line(`M${x - 10} 775L${x} 788`, i % 2 ? RED : GREEN, 2); pad(x, 788, i ? "round" : "square"); }
for (const [x, k] of [[735, "square"], [755, "round"], [775, "thermal"], [795, "lit"]]) {
  line(`M${x} 750V795`, k === "lit" ? "#ff9a80" : CYAN, 4);
  pad(x, 767, k); pad(x, 789, k);
}
box(725.5, 756.5, 80, 20, GREY); box(725.5, 778.5, 80, 20, GREY);

/* Right: VGA, SPI headers and micro USB */
box(787, 318, 126, 244, GREY, 1);
line("M787 380.500H913M787 500.500H913", GREY);
for (const y of [342, 538]) { dot(824, y, 17, DARK, "#000"); dot(824, y, 15, DARK, "#000"); dot(824, y, 12, "#000"); line(`M808 ${y - 16}L840 ${y + 16}M840 ${y - 16}L808 ${y + 16}`, "#2828b8"); }
["square", "round", "round", "cross", "thermal"].forEach((k, i) => pad(804, 408 + i * 18, k));
["thermal", "thermal", "thermal", "cross", "thermal"].forEach((k, i) => pad(824, 397 + i * 18, k));
["cross", "cross", "round", "round", "cross"].forEach((k, i) => pad(844, 406 + i * 18, k));
for (const y of [320, 515]) line(`M915 ${y}H956V${y + 45}H915M915 ${y + 10}H947L956 ${y}M915 ${y + 35}H945L956 ${y + 45}M947 ${y + 10}Q956 ${y + 14} 956 ${y + 23}T945 ${y + 35}`, CYAN);
line("M915 376H957M915 504H957", CYAN, 2);
line("M745 580H787L796 572H878", ORANGE, 6);
line("M878 572L888 580V682H848L830 662H800L790 673V767", "#ff9a80", 2);
line("M793 690V770", "#b0e000", 2);
line("M793 578V610", ORANGE, 5);
box(847.5, 562.5, 20, 120, GREY); box(867.5, 562.5, 20, 120, CYAN);
["lit", "thermal", "round", "round", "round", "square"].forEach((k, i) => { pad(857, 572 + i * 20, k); pad(877, 572 + i * 20, k); });
box(740.5, 662.5, 81, 20, GREY);
[["square", 750], ["round", 770], ["lit", 790], ["thermal", 810]].forEach(([k, x]) => pad(x, 673, k));
for (const x of [744, 759, 774]) { box(x, 577, 12, 6, ORANGE, 1, ORANGE); box(x + 0.5, 588.5, 11, 7, CYAN); }
box(745.5, 603.5, 37, 40, GREY);
for (let i = 0; i < 6; i++) { box(722.5, 605.5 + i * 7, 22, 5, GREEN, 1, OLIVE); box(782.5, 605.5 + i * 7, 22, 5, i ? GREEN : ORANGE, 1, i ? OLIVE : ORANGE); }
line("M752 616H811", RED, 3); via(752, 616); via(811, 615);
for (let i = 0; i < 5; i++) chip(843, 690 + i * 14, 20, 11);
chip(838, 761, 24, 12); chip(716, 680, 11, 20);
for (let i = 0; i < 5; i++) box(868.5, 713.5 + i * 6, 17, 4, GREEN, 1, OLIVE);
box(744.5, 701.5, 40, 37, GREY);
box(750, 719, 12, 8, ORANGE, 1, ORANGE); box(769, 719, 12, 8, ORANGE, 1, ORANGE);
line("M750 723H785", ORANGE, 5);
chip(751, 730, 11, 8); chip(770, 730, 11, 8);
line("M915 696H880V755H915", GREY, 3);
line("M914 696H924V755H914M919 696V755", CYAN, 3);
line("M822 694L819 708", "#000", 5); via(822, 694); via(817, 708);

/* Board outline */
line("M497 318.500H914", "#000", 1, { "stroke-dasharray": "4 3" });
line("M913.500 318V798", "#000", 3, { "stroke-dasharray": "2 1" });
line("M497 797.500H914", "#000", 2, { "stroke-dasharray": "3 2" });
line("M496.500 317.500H914.500V798.500H496.500Z", OLIVE);

/* Dimensions */
line("M495.500 271V316M914.500 271V316M497 292.500H914M504 287.500L497 292.500L504 297.500M906 287.500L914 292.500L906 297.500", YELLOW, 2);
line("M451 316H495M451 798.500H495M472.500 317V798M467 326L472.500 318L478 326M467 790L472.500 798L478 790", YELLOW, 2);
label("53.340 mm", 655, 287, 18, YELLOW, { "font-weight": 700 });
down("61.341 mm", 457, 508, 18, YELLOW, { "font-weight": 700 });

/* Silkscreen texts */
for (const [top, left, right] of rows) for (let i = 0; i < 6; i++) {
  const y = top + i * 14 + 3;
  label("R" + (left + i), 639, y, 9, SILK, { "text-anchor": "end" });
  label("R" + (right + i), 683, y, 9);
}
for (const [t, x, y] of [["R28", 708, 325], ["C7", 701, 347], ["C8", 718, 347], ["R15", 706, 413], ["R7", 748, 422], ["C5", 700, 438], ["C6", 716, 438], ["C1", 742, 445], ["C3", 762, 445], ["R8", 748, 474], ["C2", 744, 496], ["C4", 758, 496], ["R41", 705, 502], ["C9", 700, 525], ["C11", 715, 525], ["C15", 755, 574], ["R44", 725, 596], ["R48", 787, 596], ["R49", 635, 625], ["R42", 587, 678], ["C14", 587, 688], ["C10", 587, 705], ["R43", 587, 720], ["R52", 666, 738], ["C16", 692, 762], ["C12", 711, 677], ["L2", 828, 698], ["R46", 824, 712], ["R47", 824, 726], ["R45", 824, 740], ["L1", 831, 754], ["10uF", 863, 770], ["R51", 746, 717], ["R50", 767, 717]]) label(t, x, y);
for (const [t, x, y, s] of [["P9", 511, 359, 13], ["P4", 849, 560, 14], ["P2", 870, 560, 14], ["P5", 739, 661, 13], ["P8", 708, 772, 13], ["P7", 708, 793, 13], ["P3", 554, 773, 13], ["P6", 558, 797, 13], ["FPGA_J1", 497, 773, 11]]) label(t, x, y, s, SILK, { "font-weight": 700 });
label("K1", 533, 348, 12); label("U1", 672, 644, 12); label("U2", 757, 628, 11); label("25Q16", 751, 651, 9);
label("D1DIODESCH", 586, 634, 9); label("PWR", 586, 626, 9, GREY);
label("CONN_3", 555, 325, 13, "#808060"); label("3.3V", 549, 332, 8, GREY); label("5V", 574, 332, 8, GREY); label("GND", 591, 332, 8, GREY);
label("536", 633, 317, 9, GREY); label("R", 705, 316, 9, GREY);
label("SoC FPGA Shield V1.0", 586, 616, 7, CYAN); label("2015/03/16", 664, 627, 9, CYAN);
label("IO_PIN", 550, 787, 8, CYAN); label("CONN_6", 617, 809, 12, GREY, { "font-weight": 700 });
label("CONN_4", 757, 697, 12, GREY, { "font-weight": 700 }); label("INVENTOR", 822, 678, 8, GREY);
label("I2C", 806, 763, 12, GREY, { "font-weight": 700 }); label("I2C", 806, 783, 12, GREY, { "font-weight": 700 });
label("blog.ittraining.com.tw", 821, 792, 7, "#b4b4b4");
for (const [t, x, y, c] of [["0.1uF", 755, 565, GREY], ["10k", 725, 587, GREY], ["100", 738, 412, GREY], ["10D", 765, 432, GREY], ["10D", 738, 464, GREY], ["0.1uF", 710, 467, GREY], ["0.1uF", 711, 556, GREY], ["220k", 587, 668, CYAN], ["0.1uF", 584, 696, CYAN], ["0.1uF", 584, 712, CYAN], ["4.7k", 749, 709, CYAN], ["RX", 744, 691, GREY], ["TX", 766, 691, GREY], ["SCL", 727, 755, GREY], ["SDA", 746, 755, GREY], ["GND", 768, 755, GREY], ["3.3V", 788, 755, GREY], ["84M", 863, 698, GREY], ["84M", 863, 755, GREY], ["27", 822, 719, CYAN], ["27", 822, 748, CYAN]]) label(t, x, y, 8, c);
["3.3V", "GND", "MISO", "SCLK", "MOSI"].forEach((t, i) => { label(t, 846, 575 + i * 20, 8, i > 1 ? CYAN : GREY, { "text-anchor": "end" }); label(t, 889, 575 + i * 20, 8, GREY); });
label("CE1", 889, 675, 8, GREY);
label("GND", 895, 689, 9, "#fff"); label("6", 900, 697, 8, "#fff"); label("GND", 895, 759, 9, "#fff"); label("7", 900, 768, 9, "#fff");
up("VGA_15P", 881, 479, 18); up("P1", 905, 451, 18);
up("FPGA_J1", 595, 539, 11, SILK, { "font-weight": 700 });
up("PL2303", 668, 727, 12); up("24LCXX", 636, 765, 9); up("U3", 615, 754, 11);
up("C13", 835, 778, 9); up("J1", 910, 733, 11); up("MicroUSB_B", 898, 750, 9, GREY);
up("SPI_CE2", 875, 645, 13, GREY); up("SPI_CE1", 896, 645, 13, GREY);
up("0.1uF", 779, 465, 8, GREY); up("0.1uF", 778, 515, 8, GREY); up("220k", 659, 767, 8, GREY);
down("1 GND", 590, 636, 7, "#fff"); down("2", 613, 640, 8, "#fff");
[5, 4, 3, 2, 1].forEach((n, i) => label(n, 585 + i * 20, 777, 8, "#4090c0"));
```
